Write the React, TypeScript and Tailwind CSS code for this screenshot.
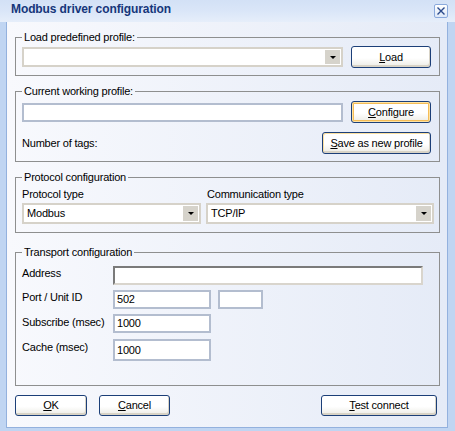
import React from "react";

const font = "font-['Liberation_Sans',Arial,sans-serif]";

function Btn({
  className,
  children,
  hot,
  soft,
}: {
  className: string;
  children: React.ReactNode;
  hot?: boolean;
  soft?: boolean;
}) {
  const sh = hot
    ? "shadow-[inset_0_0_0_1px_#fde3a6,inset_0_0_0_2px_#f5bd57]"
    : soft
    ? "shadow-[inset_1px_1px_0_#fbe0a0,inset_-1px_-2px_0_#d8d3c6]"
    : "shadow-[inset_-1px_-2px_0_#d8d3c6]";
  return (
    <div
      className={`flex shrink-0 items-center justify-center rounded-[3px] border border-[#1c3f78] bg-linear-to-b from-white from-55% to-[#ecebe4] text-[11px] leading-[13px] tracking-[-0.2px] text-black ${sh} ${className}`}
    >
      {children}
    </div>
  );
}

function Combo({ className, value }: { className: string; value?: string }) {
  return (
    <div
      className={`flex shrink-0 items-stretch border-2 border-[#d6d2c9] bg-white p-[1px] ${className}`}
    >
      <div className="flex flex-1 items-center pl-[2px] text-[11px] leading-[13px] tracking-[-0.2px] text-black">
        {value}
      </div>
      <div className="flex w-[15px] items-center justify-center bg-[#d6d3cb]">
        <div className="h-0 w-0 border-x-[3px] border-t-[3px] border-x-transparent border-t-black" />
      </div>
    </div>
  );
}

function Input({ className, value }: { className: string; value?: string }) {
  return (
    <div
      className={`flex shrink-0 items-center border-2 border-[#b3bdcf] bg-white pl-[2px] text-[11px] leading-[13px] tracking-[-0.2px] text-black ${className}`}
    >
      {value}
    </div>
  );
}

function Group({
  title,
  className,
  children,
}: {
  title: string;
  className: string;
  children: React.ReactNode;
}) {
  return (
    <fieldset className={`w-[425px] border border-[#8e8f8f] ${className}`}>
      <legend className="px-[2px] text-[11px] leading-[14px] tracking-[-0.2px] text-black">
        {title}
      </legend>
      {children}
    </fieldset>
  );
}

export default function App() {
  return (
    <div className={`relative h-[431px] w-[455px] overflow-hidden bg-[#c0d5f2] ${font}`}>
      {/* title bar */}
      <div className="relative flex h-[22px] items-start bg-linear-to-b from-[#d3e1f6] via-[#dae6f8] to-[#e6eefa] pl-[11px] pt-[1px]">
        <span className="text-[12px] font-bold leading-[16px] tracking-[-0.1px] text-[#16367a]">
          Modbus driver configuration
        </span>
        <div className="absolute left-[434px] top-[4px] flex h-[14px] w-[14px] items-center justify-center rounded-[2px] border border-[#8aa9dc] bg-linear-to-b from-white to-[#dde8f8]">
          <svg width="10" height="10" viewBox="0 0 10 10">
            <path d="M1.5 1.5 L8.5 8.5 M8.5 1.5 L1.5 8.5" stroke="#2a4a8c" strokeWidth="1.4" />
          </svg>
        </div>
      </div>

      {/* body */}
      <div className="ml-[6px] flex h-[406px] w-[442px] flex-col border-x border-b border-[#93b1de] bg-linear-to-r from-[#f8f9fd] to-[#e5ebf7] pl-[8px] pr-[7px] pt-[8px]">
        <Group title="Load predefined profile:" className="pl-[6px] pr-[8px] pt-[2px] pb-[7px]">
          <div className="flex h-[22px] items-center gap-[8px]">
            <Combo className="h-[20px] w-[321px]" />
            <Btn className="h-[22px] w-[80px]">
              <span>
                <span className="underline">L</span>oad
              </span>
            </Btn>
          </div>
        </Group>

        <Group title="Current working profile:" className="mt-[8px] pl-[6px] pr-[8px] pt-[3px] pb-[7px]">
          <div className="flex h-[22px] items-center gap-[8px]">
            <Input className="h-[19px] w-[321px]" />
            <Btn hot className="h-[22px] w-[80px]">
              <span>
                <span className="underline">C</span>onfigure
              </span>
            </Btn>
          </div>
          <div className="mt-[9px] flex h-[22px] items-center justify-between">
            <span className="text-[11px] leading-[13px] tracking-[-0.2px] text-black">
              Number of tags:
            </span>
            <Btn soft className="h-[22px] w-[109px]">
              <span>
                <span className="underline">S</span>ave as new profile
              </span>
            </Btn>
          </div>
        </Group>

        <Group title="Protocol configuration" className="mt-[8px] pl-[6px] pr-[5px] pt-[4px] pb-[8px]">
          <div className="grid grid-cols-[179px_228px] gap-x-[5px] gap-y-[2px] text-[11px] leading-[13px] tracking-[-0.2px] text-black">
            <span>Protocol type</span>
            <span className="pl-[1px]">Communication type</span>
            <Combo className="h-[21px] w-[179px]" value="Modbus" />
            <Combo className="h-[21px] w-[228px]" value="TCP/IP" />
          </div>
        </Group>

        <Group title="Transport configuration" className="mt-[12px] pl-[6px] pr-[8px] pt-[7px] pb-[24px]">
          <div className="flex flex-col text-[11px] leading-[13px] tracking-[-0.2px] text-black">
            <div className="flex items-start">
              <span className="w-[91px] pt-[1px]">Address</span>
              <div className="h-[19px] w-[310px] border-2 border-t-[#7a7a7a] border-l-[#7a7a7a] border-r-[#d9d5cd] border-b-[#d9d5cd] bg-white" />
            </div>
            <div className="mt-[5px] flex items-start">
              <span className="w-[91px] pt-[1px]">Port / Unit ID</span>
              <Input className="h-[19px] w-[98px]" value="502" />
              <Input className="ml-[7px] h-[19px] w-[45px]" />
            </div>
            <div className="mt-[5px] flex items-start">
              <span className="w-[91px] pt-[2px]">Subscribe (msec)</span>
              <Input className="h-[19px] w-[98px]" value="1000" />
            </div>
            <div className="mt-[6px] flex items-start">
              <span className="w-[91px] pt-[2px]">Cache (msec)</span>
              <Input className="h-[22px] w-[98px]" value="1000" />
            </div>
          </div>
        </Group>

        <div className="mt-[9px] flex items-center pr-[3px]">
          <Btn className="h-[21px] w-[72px]">
            <span>
              <span className="underline">O</span>K
            </span>
          </Btn>
          <Btn className="ml-[12px] h-[21px] w-[71px]">
            <span>
              <span className="underline">C</span>ancel
            </span>
          </Btn>
          <Btn className="ml-auto h-[21px] w-[116px]">
            <span>
              <span className="underline">T</span>est connect
            </span>
          </Btn>
        </div>
      </div>
    </div>
  );
}
